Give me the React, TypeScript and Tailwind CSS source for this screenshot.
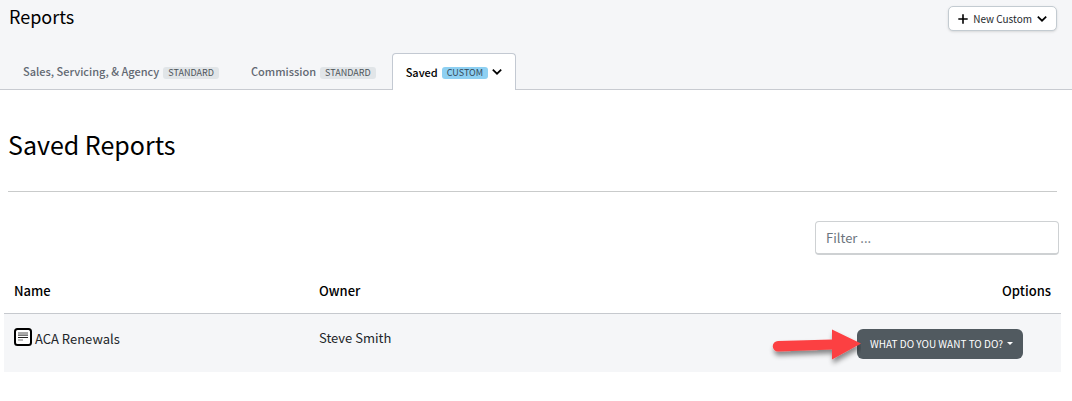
import React from "react";

function ChevronIcon() {
  return (
    <svg width="10" height="8" viewBox="0 0 10 8" fill="none" stroke="currentColor" strokeWidth="1.7" aria-hidden="true">
      <path d="M0.8 1.6 5 5.7 9.200 1.6" />
    </svg>
  );
}

function PlusIcon() {
  return (
    <svg width="10" height="10" viewBox="0 0 10 10" stroke="currentColor" strokeWidth="1.6" aria-hidden="true">
      <path d="M5 0.3v9.400M0.3 5h9.400" />
    </svg>
  );
}

function ReportIcon() {
  return (
    <svg width="18" height="18" viewBox="0 0 18 18" fill="none" aria-hidden="true">
      <rect x="1" y="1" width="16" height="16" rx="2.5" fill="#fff" stroke="#000" strokeWidth="2" />
      <rect x="4" y="4" width="10" height="3" fill="#aaa" />
      <path d="M4 7.5h10" stroke="#777" />
      <path d="M4 9.5h10" stroke="#222" />
      <path d="M4 12h5" stroke="#777" />
    </svg>
  );
}

function ArrowMark() {
  return (
    <svg
      className="pointer-events-none absolute right-full top-1/2 -mr-1 -translate-y-1/2"
      width="96"
      height="48"
      viewBox="0 0 96 48"
      aria-hidden="true"
    >
      <defs>
        <filter id="arrow-shadow" x="-10%" y="-20%" width="130%" height="160%">
          <feDropShadow dx="1" dy="4" stdDeviation="2.5" floodColor="#000" floodOpacity="0.45" />
        </filter>
      </defs>
      <path
        d="M13 21 67 19.5V9.500L96 23.500 67 39.500V29.500L13 31.500A5 5 0 0 1 13 21Z"
        fill="#fc4142"
        filter="url(#arrow-shadow)"
      />
    </svg>
  );
}

type TabProps = { label: string; tag: string; active?: boolean };

function Tab({ label, tag, active = false }: TabProps) {
  return (
    <button
      type="button"
      role="tab"
      aria-selected={active}
      className={
        active
          ? "-mb-px flex h-[37px] items-center rounded-t border border-b-0 border-[#c3c9d2] bg-white px-[13px] text-[11px] font-medium text-black"
          : "flex h-9 items-center px-4 pt-px text-[11px] font-medium text-[#626872]"
      }
    >
      {label}
      <span
        className={
          active
            ? "mt-[2px] ml-1 h-3 rounded-[3px] bg-[#8ed0f2] px-[5px] text-[9px] leading-3 font-normal text-[#344a5a]"
            : "mt-[2px] ml-1 h-3 rounded-[3px] bg-[#e1e5e8] px-[5px] text-[9px] leading-3 font-normal text-[#4d5359]"
        }
      >
        {tag}
      </span>
      {active && (
        <span className="ml-1">
          <ChevronIcon />
        </span>
      )}
    </button>
  );
}

export default function App() {
  return (
    <div className="min-h-screen bg-white font-['Noto_Sans_CJK_SC',sans-serif] text-black">
      <header className="border-b border-[#c8cbd1] bg-[#f5f6f8]">
        <div className="flex h-[53px] items-start justify-between pr-[15px] pl-[9px] pt-[6px]">
          <h1 className="text-[18px] leading-5">Reports</h1>
          <button
            type="button"
            className="flex h-[25px] items-center rounded-[5px] border border-[#c3cbd1] bg-white px-[9px] text-[10px] text-[#25282c] shadow-sm"
          >
            <span className="text-black"><PlusIcon /></span>
            <span className="mx-[5px]">New Custom</span>
            <span className="text-black"><ChevronIcon /></span>
          </button>
        </div>
        <div role="tablist" className="flex pl-[7px]">
          <Tab label="Sales, Servicing, & Agency" tag="STANDARD" />
          <Tab label="Commission" tag="STANDARD" />
          <Tab label="Saved" tag="CUSTOM" active />
        </div>
      </header>
      <main>
        <div className="mr-[15px] ml-2 border-b border-[#c9cbcb] pt-[38px] pb-[30px]">
          <h2 className="text-[25px] leading-[33px]">Saved Reports</h2>
        </div>
        <div className="mt-[29px] mr-[13px] flex justify-end">
          <input
            type="text"
            aria-label="Filter"
            placeholder="Filter ..."
            className="h-[34px] w-[244px] rounded border border-b-2 border-[#ced1d3] bg-white px-[10px] text-[13px] placeholder:text-[#6c757d]"
          />
        </div>
        <div className="mt-3 mr-[11px] ml-1">
          <table className="w-full table-fixed border-collapse text-left text-[13px] leading-5">
            <thead>
              <tr className="h-[46px] border-b border-[#c6c9ce] font-medium">
                <th scope="col" className="w-[305px] px-[10px] pt-[2px] font-medium">Name</th>
                <th scope="col" className="px-[10px] pt-[2px] font-medium">Owner</th>
                <th scope="col" className="w-[224px] px-[10px] pt-[2px] text-right font-medium">Options</th>
              </tr>
            </thead>
            <tbody>
              <tr className="h-[59px] bg-[#f5f6f8] text-[#212529]">
                <td className="px-[10px] pt-[14px] align-top">
                  <span className="flex items-start gap-[3px]">
                    <ReportIcon />
                    <span className="leading-[22px]">ACA Renewals</span>
                  </span>
                </td>
                <td className="px-[10px] pt-[14px] align-top">Steve Smith</td>
                <td className="pt-[2px] pr-[38px]">
                  <div className="relative ml-auto w-[166px]">
                    <button
                      type="button"
                      className="flex h-[30px] w-full items-center justify-between rounded-md bg-[#515a60] pr-[10px] pl-[13px] text-[10px] whitespace-nowrap text-white"
                    >
                      WHAT DO YOU WANT TO DO?
                      <svg className="shrink-0" width="6" height="3" viewBox="0 0 6 3" fill="currentColor" aria-hidden="true">
                        <path d="M0 0h6L3 3Z" />
                      </svg>
                    </button>
                    <ArrowMark />
                  </div>
                </td>
              </tr>
            </tbody>
          </table>
        </div>
      </main>
    </div>
  );
}
